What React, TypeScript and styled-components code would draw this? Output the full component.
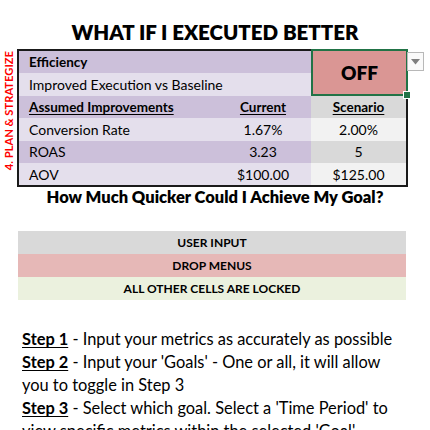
import styled, { createGlobalStyle } from "styled-components";

const GlobalStyle = createGlobalStyle`
    html, body {
        margin: 0;
        padding: 0;
        background: #ffffff;
    }
    body {
        font-family: Lato, "Open Sans", "Liberation Sans", sans-serif;
        color: #000000;
    }
`;

const Sheet = styled.div`
    width: 430px;
    height: 430px;
    overflow: hidden;
    display: flex;
    flex-direction: column;
`;

const TopEdge = styled.div`
    display: flex;
    height: 1px;
    width: 429px;
`;

const EdgePart = styled.div<{ $w: number; $c: string }>`
    width: ${(p) => p.$w}px;
    background: ${(p) => p.$c};
`;

const Title = styled.h1`
    margin: 17px 0 2px;
    height: 30px;
    text-align: center;
    font-size: 20.5px;
    font-weight: 800;
    line-height: 30px;
`;

const Band = styled.div`
    display: flex;
    align-items: flex-start;
`;

const SideLabel = styled.div`
    width: 17px;
    display: flex;
    justify-content: center;
    padding-top: 2px;
    span {
        writing-mode: vertical-rl;
        transform: rotate(180deg);
        color: #ff0000;
        font-size: 11.2px;
        font-weight: 700;
        white-space: nowrap;
    }
`;

const TableWrap = styled.div`
    position: relative;
`;

const Table = styled.div`
    display: grid;
    grid-template-columns: 196px 96px 95px;
    grid-auto-rows: 22.4px;
    width: 387px;
    border: 2px solid #1a1a1a;
    font-size: 14px;
`;

const Cell = styled.div<{ $bg: string; $span?: number; $center?: boolean; $bold?: boolean; $under?: boolean }>`
    grid-column: span ${(p) => p.$span ?? 1};
    background: ${(p) => p.$bg};
    display: flex;
    align-items: center;
    justify-content: ${(p) => (p.$center ? "center" : "flex-start")};
    padding-left: ${(p) => (p.$center ? 0 : 10)}px;
    font-size: ${(p) => (p.$bold ? 13.5 : 14)}px;
    font-weight: ${(p) => (p.$bold ? 700 : 400)};
    text-decoration: ${(p) => (p.$under ? "underline" : "none")};
    text-underline-offset: 2px;
`;

const Toggle = styled.div`
    grid-column: 3;
    grid-row: 1 / span 2;
    margin: -2px -2px 0 0;
    background: #da9694;
    border: 2px solid #217346;
    display: flex;
    align-items: center;
    justify-content: center;
    font-size: 19px;
    font-weight: 800;
    position: relative;
`;

const Handle = styled.span`
    position: absolute;
    right: -5px;
    bottom: -5px;
    width: 6px;
    height: 6px;
    background: #217346;
    border: 1px solid #ffffff;
`;

const DropButton = styled.div`
    position: absolute;
    left: 390px;
    top: 3px;
    width: 15px;
    height: 17px;
    background: #fafafa;
    border: 1px solid #b8b8b8;
    display: flex;
    align-items: center;
    justify-content: center;
`;

const Question = styled.h2`
    margin: 0;
    height: 20px;
    text-align: center;
    font-size: 16.5px;
    font-weight: 800;
    line-height: 20px;
`;

const Legend = styled.div`
    margin: 24px 0 0 18px;
    width: 388px;
    display: flex;
    flex-direction: column;
`;

const LegendRow = styled.div<{ $bg: string }>`
    height: 23px;
    background: ${(p) => p.$bg};
    display: flex;
    align-items: center;
    justify-content: center;
    font-size: 12px;
    font-weight: 700;
`;

const Steps = styled.div`
    margin: 27px 0 0 22px;
    width: 376px;
    font-size: 16.4px;
    line-height: 23px;
    p {
        margin: 0;
    }
    b {
        text-decoration: underline;
        text-underline-offset: 2px;
    }
`;

const rows = [
    { label: "Conversion Rate", current: "1.67%", scenario: "2.00%" },
    { label: "ROAS", current: "3.23", scenario: "5" },
    { label: "AOV", current: "$100.00", scenario: "$125.00" },
];

const PURPLE = "#ccc0da";
const LILAC = "#e4dfec";
const GREY = "#d9d9d9";
const PALE = "#f2f2f2";

function App() {
    return (
        <Sheet>
            <GlobalStyle />
            <TopEdge>
                <EdgePart $w={311} $c="#bdbdbd" />
                <EdgePart $w={95} $c="#217346" />
                <EdgePart $w={23} $c="#bdbdbd" />
            </TopEdge>
            <Title>WHAT IF I EXECUTED BETTER</Title>
            <Band>
                <SideLabel>
                    <span>4. PLAN &amp; STRATEGIZE</span>
                </SideLabel>
                <TableWrap>
                    <Table>
                        <Cell $bg={PURPLE} $span={2} $bold>Efficiency</Cell>
                        <Toggle>
                            OFF
                            <Handle />
                        </Toggle>
                        <Cell $bg={LILAC} $span={2}>Improved Execution vs Baseline</Cell>
                        <Cell $bg={PURPLE} $bold $under>Assumed Improvements</Cell>
                        <Cell $bg={PURPLE} $center $bold $under>Current</Cell>
                        <Cell $bg={GREY} $center $bold $under>Scenario</Cell>
                        {rows.map((r, i) => {
                            const bg = i % 2 === 0 ? LILAC : PURPLE;
                            return [
                                <Cell key={r.label} $bg={bg}>{r.label}</Cell>,
                                <Cell key={r.label + "c"} $bg={bg} $center>{r.current}</Cell>,
                                <Cell key={r.label + "s"} $bg={i % 2 === 0 ? PALE : GREY} $center>{r.scenario}</Cell>,
                            ];
                        })}
                    </Table>
                    <DropButton>
                        <svg width="9" height="6" viewBox="0 0 9 6">
                            <path d="M0 0 L9 0 L4.5 5.5 Z" fill="#7f7f7f" />
                        </svg>
                    </DropButton>
                </TableWrap>
            </Band>
            <Question>How Much Quicker Could I Achieve My Goal?</Question>
            <Legend>
                <LegendRow $bg="#d9d9d9">USER INPUT</LegendRow>
                <LegendRow $bg="#e6b8b7">DROP MENUS</LegendRow>
                <LegendRow $bg="#ebf1de">ALL OTHER CELLS ARE LOCKED</LegendRow>
            </Legend>
            <Steps>
                <p><b>Step 1</b> - Input your metrics as accurately as possible</p>
                <p><b>Step 2</b> - Input your 'Goals' - One or all, it will allow you to toggle in Step 3</p>
                <p><b>Step 3</b> - Select which goal. Select a 'Time Period' to view specific metrics within the selected 'Goal'</p>
            </Steps>
        </Sheet>
    );
}

export default App;
